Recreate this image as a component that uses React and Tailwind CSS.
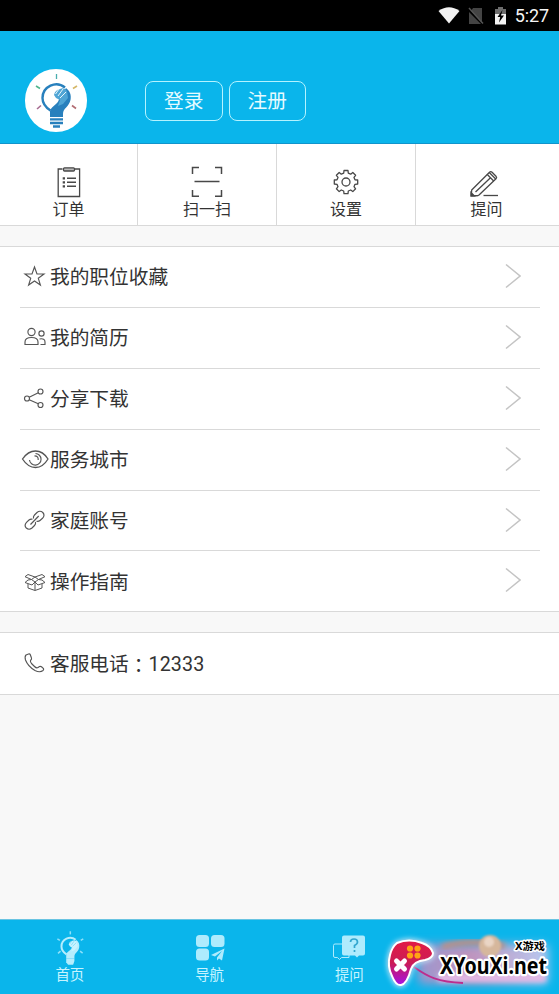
import React from "react";

const cjk = "font-['Roboto','Noto_Sans_CJK_SC',sans-serif]";

function StatusBar() {
  return (
    <div className="flex h-[31px] items-center justify-end bg-black pr-[10px] text-white">
      <svg width="74" height="24" viewBox="0 0 74 24" className="mr-[3px]">
        <path d="M0.500 6.500Q11 -1 21.500 6.500L11 19Z" fill="#f2f2f2" transform="translate(0 .5)" />
        <path d="M35 4H44V19L33 7Z M31 8L43 20H31Z" fill="#444" />
        <path d="M31 4L45 19.500" stroke="#555" strokeWidth="1.500" />
        <path d="M57 5H60V3H65V5H68V11H57Z" fill="#6d6d6d" />
        <path d="M57 10H68V20.500H57Z" fill="#f4f4f4" />
        <path d="M64.500 6L59.500 13H62.200L61 18.500L66 11.500H63Z" fill="#000" />
      </svg>
      <span className="font-['Roboto',sans-serif] text-[18px] leading-[31px] tracking-[-0.1px] text-[#f5f5f5]">5:27</span>
    </div>
  );
}

function Bulb({ mono }) {
  const rays = mono
    ? ["#8fe1fa", "#8fe1fa", "#8fe1fa", "#8fe1fa", "#8fe1fa"]
    : ["#48adae", "#4fb58d", "#d5b767", "#a66c91", "#b26c72"];
  const main = mono ? "#b5edfd" : "#2880bd";
  const w = mono ? 3.2 : 2.4;
  return (
    <g fill="none">
      <path d="M31.500 5V10" stroke={rays[0]} strokeWidth={mono ? 2.4 : 1.3} />
      <path d="M11 17L15 19.500" stroke={rays[1]} strokeWidth={mono ? 2.4 : 1.6} />
      <path d="M48 19.500L52 17" stroke={rays[2]} strokeWidth={mono ? 2.4 : 1.6} />
      <path d="M12 40L16 36.500" stroke={rays[3]} strokeWidth={mono ? 2.4 : 1.6} />
      <path d="M47 36.500L51 39.500" stroke={rays[4]} strokeWidth={mono ? 2.4 : 1.6} />
      <path d="M25.500 41.500C20 38 17.500 34 17.500 29A13.800 13.800 0 0 1 40 18.500" stroke={main} strokeWidth={w} />
      <path d="M25 48V42C27 36 33 36 34 30L41 19C45 22 46.500 26 45.500 31C44 38 38 39 38 45V48Z" fill={main} />
      <path d="M29 26Q30 21 35 20Q39 18 42 22L43 29L38 35L33 37L35 31L31 29Z" fill={mono ? "#c9f3ff" : "#4fa5d5"} />
      <path d="M34 20L30.500 25M38 20L33 27M41 23L35 29" stroke={mono ? "#6bd5f5" : "#e8f7fc"} strokeWidth="1" />
      {mono
        ? <path d="M25 48H38V52L36 58H28L25 54Z" fill={main} />
        : <path d="M25 50.300H38M25 54H38M28 57.500H35" stroke={main} strokeWidth="2.300" />}
    </g>
  );
}

function Header() {
  return (
    <header className="flex h-[113px] items-start border-b border-[#1194cb] bg-[#0ab5eb] pl-[25px]">
      <div className="mt-[38px] h-[63px] w-[62px] overflow-hidden rounded-full bg-white">
        <svg width="62" height="63" viewBox="0 0 62 63"><Bulb /></svg>
      </div>
      <div className="ml-[58px] mt-[50px] flex gap-[6px]">
        {["登录", "注册"].map((t) => (
          <button key={t} className="flex h-10 w-[77.500px] items-center justify-center rounded-[8px] border-[1.500px] border-[#b4f3ff] pt-px text-[19.700px] leading-[30px] text-[#e6fbff]">{t}</button>
        ))}
      </div>
    </header>
  );
}

const tiles = [
  { label: "订单", width: "w-[138px]", icon: (
    <g>
      <path d="M7.500 5H3.200V32.500H24.600V5H20" />
      <rect x="8.500" y="3.800" width="11" height="3.200" rx="1" fill="#bbb" />
      <path d="M12 14.300H21M12 18.300H21M12 22.300H21" strokeWidth="1.400" />
      <path d="M7.700 14.300H10M7.700 18.300H10M7.700 22.300H10" strokeWidth="2.200" />
    </g>), box: "0 0 28 36", w: 28 },
  { label: "扫一扫", width: "w-[139px]", icon: (
    <path d="M2.500 10V3.500H9M25 3.500H31.500V10M2.500 26V32.200H9M25 32.200H31.500V26M4.500 17.500H29.500" strokeWidth="1.500" />), box: "0 0 34 36", w: 34 },
  { label: "设置", width: "w-[139px]", icon: (
    <g>
      <path d="M11.700 9.200L12 6.500H16L16.300 9.200L18.700 10.200L20.800 8.500L23.600 11.300L22 13.400L23 15.800L25.700 16V20L23 20.300L22 22.700L23.600 24.800L20.800 27.600L18.700 26L16.300 27L16 29.700H12L11.700 27L9.300 26L7.200 27.600L4.400 24.800L6 22.700L5 20.300L2.300 20V16L5 15.800L6 13.400L4.400 11.300L7.200 8.500L9.300 10.200Z" strokeLinejoin="round" />
      <circle cx="14" cy="18" r="4" />
    </g>), box: "0 0 28 36", w: 28 },
  { label: "提问", width: "w-[143px]", icon: (
    <g transform="translate(-3 0)">
      <path d="M1.200 31.700L1.700 26L19.500 8.300Q20.800 7 22.100 8.300L26 12.200Q27.200 13.500 26 14.800L9 31Q7.500 32 6 31.700Z" strokeLinejoin="round" />
      <path d="M17.300 10.500L23.700 17M19.300 8.500L25.700 15M5.500 28L20.500 13.700" />
      <path d="M1 28.500L4.500 32H1Z" fill="#333" />
      <path d="M13.500 31.500H28" />
    </g>), box: "0 0 28 36", w: 28 },
];

function Tiles() {
  return (
    <section className="flex h-[82px] border-b border-[#d9d9d9] bg-white">
      {tiles.map((t, i) => (
        <div key={t.label} className={`${t.width} flex shrink-0 flex-col items-center pt-[20px] ${i < 3 ? "border-r border-[#d9d9d9]" : "pr-[2px]"}`}>
          <svg width={t.w} height="36" viewBox={t.box} fill="none" stroke="#484848" strokeWidth="1.300" className="overflow-visible">{t.icon}</svg>
          <span className="pt-px text-[16px] leading-[18px] text-[#333]">{t.label}</span>
        </div>
      ))}
    </section>
  );
}

const rows = [
  ["我的职位收藏", <path d="M14.500 5L17 12H24L18.300 16.300L20.400 23L14.500 19L8.600 23L10.700 16.300L5 12H12Z" />],
  ["我的简历", <g>
    <circle cx="11.500" cy="9" r="3.600" /><path d="M5 21.500V19Q5 14.500 11.500 14.500Q18 14.500 18 19V21.500Z" />
    <circle cx="21.500" cy="10.500" r="2.600" /><path d="M19.500 16Q25 15 25 19V21.500H20.500" />
  </g>],
  ["分享下载", <g><circle cx="7" cy="14.500" r="2.500" /><circle cx="20.500" cy="7.500" r="2.500" /><circle cx="20.500" cy="21" r="2.500" /><path d="M9.200 13.300L18.300 8.700M9.200 15.700L18.300 19.800" /></g>],
  ["服务城市", <g><path d="M2.500 14Q8 6 15.500 6Q23 6 28 14Q23 22.500 15.500 22.500Q8 22.500 2.500 14Z" strokeWidth="1.300" /><path d="M15.500 8.500A5.800 5.800 0 1 1 9.500 15" /><path d="M14.500 10.800Q18.500 10.800 18.200 15" /></g>],
  ["家庭账号", <g>
    <path d="M13.500 12.500Q13 10.500 14.500 9L17 6.500Q20 4 22.800 6.500Q25.300 9.300 22.500 12.300L20 14.500Q18.500 15.800 16.500 15.300" />
    <path d="M15.500 16Q16 18 14.500 19.500L12 22Q9 24.500 6.300 22Q3.800 19.300 6.500 16.300L9 14Q10.500 12.700 12.500 13.200" />
    <path d="M10.500 18.500L18.700 10" />
  </g>],
  ["操作指南", <g strokeLinejoin="round" strokeWidth="1">
    <path d="M15 10L8 7.500L5 9.700L11.500 12.500ZM15 10L22 7.500L25 9.700L18.500 12.500ZM8 13L5 15.500L12 18L15 15L18 18L25 15.500L22 13M8 17V21L15 23.500L22 21V17M8 13L11.500 12.500L15 15L18.500 12.500L22 13M15 15V23" />
  </g>],
];

function RowIcon({ children }) {
  return <svg width="30" height="30" viewBox="0 0 30 30" fill="none" stroke="#555" strokeWidth="1.150" className="shrink-0">{children}</svg>;
}

function List() {
  return (
    <section className="mt-[20px] h-[366px] border-y border-[#d9d9d9] bg-white pl-5 pr-[19px]">
      {rows.map(([label, icon], i) => (
        <div key={label} className={`flex items-center ${i < 5 ? "h-[60.900px] border-b border-[#d9d9d9]" : "h-[60px]"}`}>
          <div className="flex flex-1 items-center pt-px">
            <RowIcon>{icon}</RowIcon>
            <span className="pt-[2px] text-[19.700px] leading-[30px] text-[#333]">{label}</span>
          </div>
          <svg width="16" height="26" viewBox="0 0 16 26" fill="none" stroke="#c4c4c4" strokeWidth="1.500" className="mb-[2px] mr-[19.500px]"><path d="M1 1.500L15 13L1 24.500" /></svg>
        </div>
      ))}
    </section>
  );
}

function Phone() {
  return (
    <section className="mt-[20px] flex h-[63px] items-center border-y border-[#d9d9d9] bg-white px-5">
      <RowIcon><path d="M6 6L8.500 5Q9.800 4.600 10.200 5.500L11.500 9Q12 10 10.500 11.500Q10 12.500 11.500 14.500L14.500 17.500Q16.500 19.500 18 18.500L19.500 17.500Q20.500 17 21.500 17.800L23.500 19.500Q24 20.500 23 21.500Q20 24 15 21.500Q8 17.500 5.500 11Q4.500 7.500 6 6Z" /></RowIcon>
      <span className="flex items-center pt-[2px] text-[19.700px] leading-[30px] text-[#333]">客服电话<span className="pt-px font-['Noto_Sans_CJK_TC',sans-serif]">：</span><span className="tracking-[0.150px]">12333</span></span>
    </section>
  );
}

function TabBar() {
  const c = "#aeebfd";
  return (
    <nav className="mt-auto grid h-[75px] grid-cols-4 border-t border-[#69c4e2] bg-[#0ab5eb] pt-[10px]">
      <div className="flex flex-col items-center">
        <svg width="36" height="36" viewBox="6 3 50 57"><Bulb mono /></svg>
        <span className="pt-px text-[14.500px] leading-[18px] text-[#c7f4ff]">首页</span>
      </div>
      <div className="flex flex-col items-center">
        <svg width="30" height="36" viewBox="0 0 30 36" fill={c}>
          <rect x="1" y="5" width="13" height="12" rx="3.500" /><rect x="16" y="5" width="13.500" height="12" rx="3.500" /><rect x="1" y="18.500" width="13" height="12" rx="3.500" />
          <path d="M29.500 18.500L16 25L20 26.500L27 21L22 27.500V30.500L24 28.500L27 30.500Z" />
        </svg>
        <span className="pt-px text-[14.500px] leading-[18px] text-[#c7f4ff]">导航</span>
      </div>
      <div className="flex flex-col items-center">
        <svg width="34" height="36" viewBox="0 0 34 36">
          <path d="M10 14H3Q1.500 14 1.500 15.500V26Q1.500 27.500 3 27.500H5.500L7.500 29.500L9.500 27.500H17V25" fill="none" stroke={c} />
          <path d="M12 5.500H31Q33 5.500 33 7.500V23.500Q33 25.500 31 25.500H27L25 27.500L23 25.500H12Q10 25.500 10 23.500V7.500Q10 5.500 12 5.500Z" fill={c} />
          <path d="M18.500 12Q18.500 9 22 9Q25.500 9 25.500 12Q25.500 14 22.500 15.500V18M22.500 20V22" fill="none" stroke="#32a6cf" strokeWidth="1.700" />
        </svg>
        <span className="pt-px text-[14.500px] leading-[18px] text-[#c7f4ff]">提问</span>
      </div>
      <div />
    </nav>
  );
}

function Watermark() {
  return (
    <svg className="absolute bottom-0 right-0" width="179" height="74" viewBox="0 0 179 74">
      <defs>
        <filter id="soft" x="-30%" y="-60%" width="160%" height="220%"><feGaussianBlur stdDeviation="5" /></filter>
        <filter id="glow" x="-30%" y="-60%" width="160%" height="220%"><feGaussianBlur stdDeviation="2.500" /></filter>
        <filter id="edge" x="-30%" y="-30%" width="160%" height="160%"><feGaussianBlur stdDeviation=".8" /></filter>
        <linearGradient id="haze" x1="0" x2="1"><stop stopColor="#9b97cf" /><stop offset=".4" stopColor="#bf93bd" /><stop offset="1" stopColor="#b9c9f0" /></linearGradient>
        <linearGradient id="pad" x1="0" y1="0" x2="0" y2="1"><stop stopColor="#e21b45" /><stop offset=".5" stopColor="#cb1c55" /><stop offset="1" stopColor="#a611e5" /></linearGradient>
      </defs>
      <rect x="38" y="24" width="130" height="40" rx="5" fill="url(#haze)" filter="url(#soft)" />
      <path d="M62 27Q90 18 125 26" stroke="#bd8f86" strokeWidth="6" fill="none" filter="url(#glow)" />
      <g filter="url(#edge)">
        <circle cx="110" cy="26" r="11" fill="#d6b79c" />
        <circle cx="109" cy="22" r="5" fill="#ead5c5" />
      </g>
      <path d="M58 54H166V62H58Z" fill="#e6b9e5" filter="url(#glow)" />
      <path d="M34 47C48 57 58 62 83 63" fill="none" stroke="#bd2d8d" strokeWidth="1.800" />
      <path d="M17 23Q29 18 42 23Q51 26 53 33Q53 38 45 40Q34 41 31 49Q27 64 21 65Q16 66 12 56Q7 46 10 35Q12 27 17 23Z" fill="url(#pad)" stroke="#bfe9fb" strokeWidth="4" filter="url(#glow)" />
      <path d="M17 23Q29 18 42 23Q51 26 53 33Q53 38 45 40Q34 41 31 49Q27 64 21 65Q16 66 12 56Q7 46 10 35Q12 27 17 23Z" fill="url(#pad)" stroke="white" strokeWidth="2" />
      <g fill="#ffa314"><circle cx="30" cy="28.500" r="3.100" /><circle cx="37.500" cy="28.500" r="3.100" /><circle cx="30" cy="35.500" r="3.100" /><circle cx="37.500" cy="35.500" r="3.100" /></g>
      <path d="M16.500 41L24.500 49M24.500 41L16.500 49" stroke="white" strokeWidth="5" strokeLinecap="round" />
      <g fill="black" stroke="white" strokeLinejoin="round" paintOrder="stroke" fontWeight="700">
        <text x="60" y="54" fontSize="24" strokeWidth="4.500" textLength="107" lengthAdjust="spacingAndGlyphs" fontFamily="Noto Sans, Open Sans, sans-serif">XYouXi.net</text>
        <text x="135" y="30" fontSize="10.500" strokeWidth="3" textLength="30" lengthAdjust="spacingAndGlyphs" fontFamily="Noto Sans, Noto Sans CJK SC, sans-serif">X游戏</text>
      </g>
    </svg>
  );
}

export default function App() {
  return (
    <main className={`${cjk} relative flex h-[994px] w-[559px] flex-col overflow-hidden bg-[#f8f8f8]`}>
      <StatusBar />
      <Header />
      <Tiles />
      <List />
      <Phone />
      <TabBar />
      <Watermark />
    </main>
  );
}
